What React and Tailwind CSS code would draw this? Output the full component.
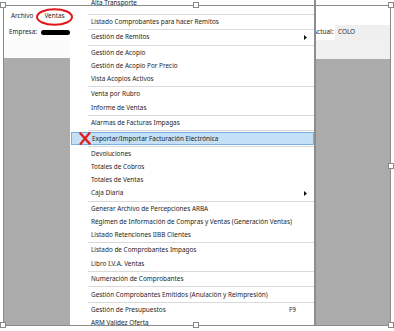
import React from 'react'

const FONT = { fontFamily: '"Noto Sans", "Open Sans", sans-serif' }

const MENU = [
  { t: 'Alta Transporte', cut: true },
  'sep',
  { t: 'Listado Comprobantes para hacer Remitos' },
  'sep',
  { t: 'Gestión de Remitos', sub: true },
  'sep',
  { t: 'Gestión de Acopio' },
  { t: 'Gestión de Acopio Por Precio' },
  { t: 'Vista Acopios Activos' },
  'sep',
  { t: 'Venta por Rubro' },
  { t: 'Informe de Ventas' },
  'sep',
  { t: 'Alarmas de Facturas Impagas' },
  'sep',
  { t: 'Exportar/Importar Facturación Electrónica', active: true },
  'sep',
  { t: 'Devoluciones' },
  { t: 'Totales de Cobros' },
  { t: 'Totales de Ventas' },
  { t: 'Caja Diaria', sub: true },
  'sep',
  { t: 'Generar Archivo de Percepciones ARBA' },
  { t: 'Régimen de Información de Compras y Ventas (Generación Ventas)' },
  { t: 'Listado Retenciones IIBB Clientes' },
  'sep',
  { t: 'Listado de Comprobantes Impagos' },
  { t: 'Libro I.V.A. Ventas' },
  'sep',
  { t: 'Numeración de Comprobantes' },
  'sep',
  { t: 'Gestión Comprobantes Emitidos (Anulación y Reimpresión)' },
  'sep',
  { t: 'Gestión de Presupuestos', key: 'F9' },
  { t: 'ARM Validez Oferta' },
]

// selection handles of the picture frame
const HANDLES = [
  [3, 5], [196, 5], [391, 5], [391, 166], [391, 325], [196, 325], [3, 325],
]

export default function App() {
  return (
    <div className="relative w-[394px] h-[331px] bg-white overflow-hidden text-[#1e1e1e]" style={FONT}>
      <div className="flex h-[325px] pl-[3px]">
        {/* left part of the app window */}
        <div className="w-[67px] flex flex-col overflow-hidden">
          <div className="h-[25px] flex items-end pb-[6px] gap-[11px] pl-[8px] text-[6.4px] leading-none">
            <span>Archivo</span>
            <span>Ventas</span>
          </div>
          <div className="h-[15px] flex items-center pl-[6px] gap-[4px] text-[6.4px] leading-none">
            <span>Empresa:</span>
            <div className="w-[30px] h-[5px] rounded-full bg-black" />
          </div>
          <div className="h-[18px] bg-[#fbfbfb]" />
          <div className="flex-1 bg-[#ababab]" />
        </div>

        {/* dropdown menu */}
        <div className="w-[246px] bg-white border-r-2 border-[#8d8d8d] flex flex-col overflow-hidden">
          {MENU.map((m, i) =>
            m === 'sep' ? (
              <div key={i} className="h-[2.4px] flex items-center pl-[18px] shrink-0">
                <div className="h-px w-full bg-[#dadada]" />
              </div>
            ) : (
              <MenuRow key={i} item={m} />
            )
          )}
        </div>

        {/* right part of the app window */}
        <div className="w-[74px] flex flex-col overflow-hidden">
          <div className="h-[25px]" />
          <div className="h-[15px] flex items-center text-[6.4px] leading-none">
            <span className="ml-[-3px] w-[22px] shrink-0">Actual:</span>
            <div className="flex-1 h-full bg-[#efefef] flex items-center pl-[3px]">COLO</div>
          </div>
          <div className="h-[19px] bg-[#f0f0f0]" />
          <div className="flex-1 bg-[#ababab]" />
        </div>
      </div>

      {/* picture frame */}
      <div className="absolute left-[3px] top-[5px] w-[388px] h-[321px] border border-[#8a8a8a] pointer-events-none" />
      {HANDLES.map(([x, y], i) => (
        <div
          key={i}
          className="absolute w-[6px] h-[6px] bg-white border border-[#8a8a8a]"
          style={{ left: x - 3, top: y - 3 }}
        />
      ))}

      {/* red circle around Ventas */}
      <svg className="absolute left-[35px] top-[8px]" width="39" height="19" viewBox="0 0 39 19">
        <ellipse cx="19.5" cy="9" rx="17.5" ry="7.8" fill="none" stroke="#e3161c" strokeWidth="2" />
      </svg>
    </div>
  )
}

function MenuRow({ item }) {
  return (
    <div
      className={`relative h-[13.1px] shrink-0 flex items-center text-[6.4px] leading-none ${
        item.active ? 'ml-[1px] bg-[#c4e0f6] border border-[#78b0e4]' : ''
      }`}
    >
      <div className={`${item.active ? 'w-[20px]' : 'w-[21px]'} shrink-0 flex items-center justify-center`}>
        {item.active && (
          <svg width="12" height="13" viewBox="0 0 12 13" className="ml-[6px]">
            <path d="M1.5 1.5 L10.5 11.5" stroke="#e1201f" strokeWidth="2.6" strokeLinecap="round" />
            <path d="M10.5 1 L1.5 12" stroke="#e1201f" strokeWidth="2.2" strokeLinecap="round" />
          </svg>
        )}
      </div>
      <span className={`flex-1 whitespace-nowrap ${item.cut ? 'relative top-[-3px]' : ''}`}>{item.t}</span>
      {item.key && <span className="mr-[18px]">{item.key}</span>}
      {item.sub && (
        <svg width="3" height="5" viewBox="0 0 3 5" className="mr-[7px]">
          <polygon points="0,0 3,2.5 0,5" fill="#111" />
        </svg>
      )}
    </div>
  )
}
